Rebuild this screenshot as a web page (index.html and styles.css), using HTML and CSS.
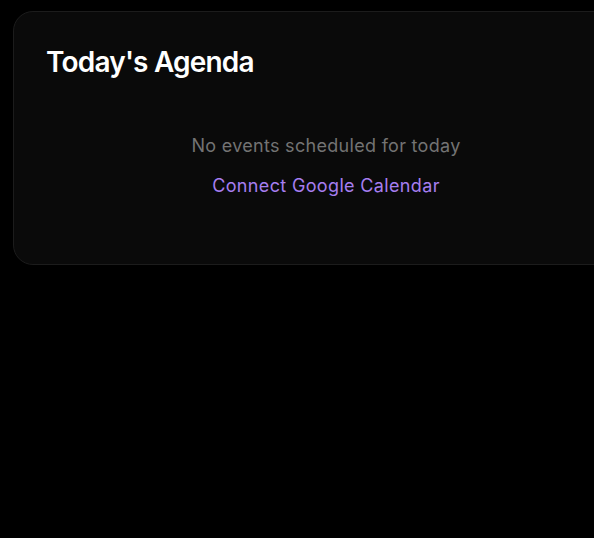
FILE: index.html
```html
<!DOCTYPE html>
<html lang="en">
<head>
<meta charset="utf-8">
<link rel="stylesheet" href="styles.css">
<title>Today's Agenda</title>
</head>
<body>
<div class="page">
  <section class="card">
    <h2 class="card-title">Today's Agenda</h2>
    <div class="empty">
      <p class="empty-text">No events scheduled for today</p>
      <a class="connect-link" href="#">Connect Google Calendar</a>
    </div>
  </section>
</div>
</body>
</html>
```
FILE: styles.css
```css
html, body {
  margin: 0;
  padding: 0;
  background: #000000;
  overflow: hidden;
}
body {
  font-family: Inter, "Noto Sans", sans-serif;
  color: #ffffff;
}
.page {
  padding: 11px 0 0 13px;
  width: 700px;
}
.card {
  width: 626px;
  box-sizing: border-box;
  background: #0a0a0a;
  border: 1px solid #1c1c1c;
  border-radius: 20px;
  padding: 32px;
}
.card-title {
  margin: 0 0 20px 0;
  font-size: 28px;
  line-height: 36px;
  font-weight: 600;
  letter-spacing: -0.8px;
  color: #ffffff;
}
.empty {
  display: flex;
  flex-direction: column;
  align-items: center;
  padding: 32px 0;
  gap: 12px;
}
.empty-text {
  margin: 0;
  font-size: 18px;
  line-height: 28px;
  letter-spacing: 0.3px;
  color: #737373;
}
.connect-link {
  font-size: 18px;
  line-height: 28px;
  letter-spacing: 0.35px;
  color: #a67ef0;
  text-decoration: none;
}
```
